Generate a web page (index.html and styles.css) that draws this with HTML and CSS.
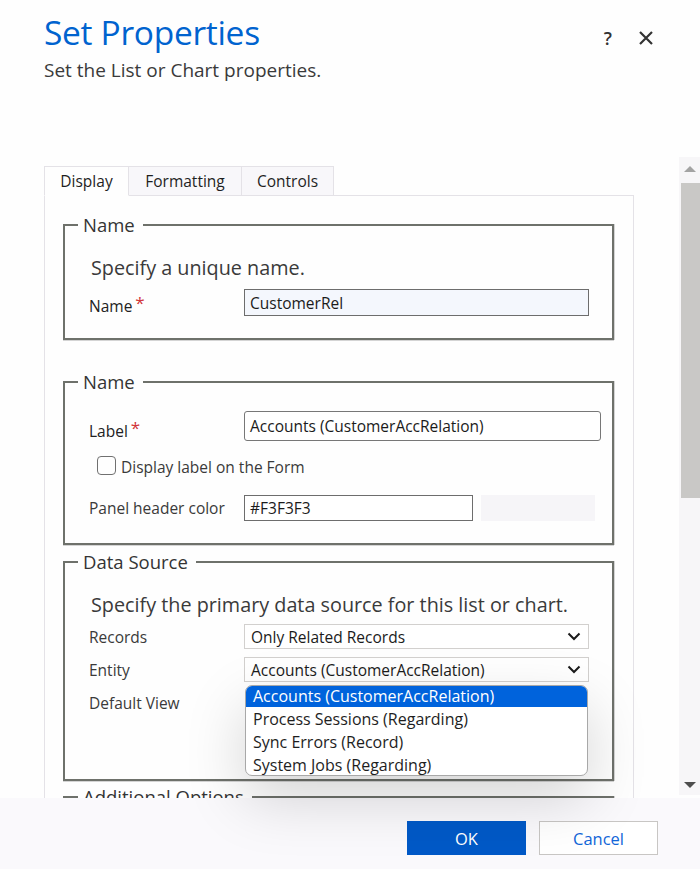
FILE: index.html
```html
<!DOCTYPE html>
<html lang="en">
<head>
<meta charset="utf-8">
<title>Set Properties</title>
<link rel="stylesheet" href="styles.css">
</head>
<body>
<div class="dialog">
  <header class="header">
    <div class="heading">
      <h1 class="title">Set Properties</h1>
      <p class="subtitle">Set the List or Chart properties.</p>
    </div>
    <div class="header-actions">
      <span class="help">?</span>
      <svg class="close" width="16" height="16" viewBox="0 0 16 16" aria-hidden="true">
        <path d="M2 2 L14 14 M14 2 L2 14" stroke="#333" stroke-width="2.2" fill="none"/>
      </svg>
    </div>
  </header>

  <div class="body">
    <div class="main">
      <div class="tabs">
        <div class="tab tab-active tab-display">Display</div>
        <div class="tab tab-formatting">Formatting</div>
        <div class="tab tab-controls">Controls</div>
        <div class="tab-rest"></div>
      </div>
      <div class="panel">
        <fieldset class="group group-name">
          <legend>Name</legend>
          <p class="desc">Specify a unique name.</p>
          <div class="row row-name">
            <label class="lbl">Name<span class="req">*</span></label>
            <div class="input input-name">CustomerRel</div>
          </div>
        </fieldset>

        <fieldset class="group group-label">
          <legend>Name</legend>
          <div class="row row-label">
            <label class="lbl lbl-dark">Label<span class="req">*</span></label>
            <div class="input input-label">Accounts (CustomerAccRelation)</div>
          </div>
          <div class="row row-check">
            <span class="checkbox"></span>
            <span class="check-text">Display label on the Form</span>
          </div>
          <div class="row row-color">
            <label class="lbl">Panel header color</label>
            <div class="input input-color">#F3F3F3</div>
            <div class="swatch"></div>
          </div>
        </fieldset>

        <fieldset class="group group-source">
          <legend>Data Source</legend>
          <p class="desc">Specify the primary data source for this list or chart.</p>
          <div class="row row-select">
            <label class="lbl">Records</label>
            <div class="select">Only Related Records
              <svg class="chev" width="14" height="9" viewBox="0 0 14 9"><path d="M1.5 1.5 L7 7 L12.5 1.5" stroke="#1b1b1b" stroke-width="2" fill="none"/></svg>
            </div>
          </div>
          <div class="row row-select row-entity">
            <label class="lbl">Entity</label>
            <div class="select">Accounts (CustomerAccRelation)
              <svg class="chev" width="14" height="9" viewBox="0 0 14 9"><path d="M1.5 1.5 L7 7 L12.5 1.5" stroke="#1b1b1b" stroke-width="2" fill="none"/></svg>
            </div>
            <ul class="dropdown">
              <li class="opt opt-selected">Accounts (CustomerAccRelation)</li>
              <li class="opt">Process Sessions (Regarding)</li>
              <li class="opt">Sync Errors (Record)</li>
              <li class="opt">System Jobs (Regarding)</li>
            </ul>
          </div>
          <div class="row row-view">
            <label class="lbl">Default View</label>
          </div>
        </fieldset>

        <fieldset class="group group-options">
          <legend>Additional Options</legend>
          <div class="spacer"></div>
        </fieldset>
      </div>
    </div>
    <div class="scrollbar">
      <span class="arrow-up"></span>
      <span class="thumb"></span>
      <span class="track"></span>
      <span class="arrow-down"></span>
    </div>
  </div>

  <footer class="footer">
    <button class="btn btn-primary">OK</button>
    <button class="btn btn-secondary">Cancel</button>
  </footer>
</div>
</body>
</html>
```

FILE: styles.css
```css
html, body {
  margin: 0;
  padding: 0;
  overflow: hidden;
  background: #fefefe;
}

body {
  font-family: "Open Sans", "Noto Sans", sans-serif;
  color: #323130;
}

.dialog {
  width: 700px;
  height: 869px;
  display: flex;
  flex-direction: column;
}

/* Header */
.header {
  height: 157px;
  display: flex;
  justify-content: space-between;
  align-items: flex-start;
  padding-left: 44px;
  box-sizing: border-box;
}

.title {
  margin: 12px 0 0 0;
  font-size: 33.5px;
  line-height: 40px;
  font-weight: 400;
  color: #0063cf;
  letter-spacing: -0.3px;
}

.subtitle {
  margin: 6px 0 0 0;
  font-size: 19px;
  line-height: 24px;
  color: #3a3a3a;
}

.header-actions {
  display: flex;
  align-items: center;
  gap: 26px;
  margin-top: 27px;
  margin-right: 46px;
}

.help {
  font-size: 18px;
  line-height: 22px;
  color: #333;
  font-weight: 600;
}

.close {
  display: block;
}

/* Body */
.body {
  height: 641px;
  display: flex;
  padding-left: 44px;
  position: relative;
}

.main {
  width: 590px;
  padding-top: 9px;
}

.tabs {
  display: flex;
  height: 30px;
}

.tab {
  box-sizing: border-box;
  height: 30px;
  border: 1px solid #e4e2e7;
  border-left: none;
  background: #f8f7fa;
  font-size: 15.5px;
  line-height: 28px;
  text-align: center;
  color: #1f1f1f;
}

.tab-display {
  width: 85px;
  border-left: 1px solid #e4e2e7;
  background: #fefefe;
  border-bottom-color: #fefefe;
}

.tab-formatting { width: 113px; }
.tab-controls { width: 92px; }

.tab-rest {
  flex: 1;
  border-bottom: 1px solid #e4e2e7;
}

.panel {
  border-left: 1px solid #e4e2e7;
  border-right: 1px solid #e4e2e7;
  padding: 18px 19px 0 18px;
}

/* Fieldsets */
.group {
  margin: 0;
  padding: 0 0 0 24px;
  border: 2px solid #6e716b;
  box-shadow: 0 1px 0 #d4d4d4, 1px 0 0 #d4d4d4;
  min-width: 0;
  position: relative;
}

.group legend {
  font-size: 18.5px;
  line-height: 22px;
  padding: 0 8px 0 5px;
  margin-left: -11px;
  color: #343434;
}

.group-name { padding-bottom: 21px; }
.group-label { margin-top: 31px; padding-bottom: 22px; }
.group-source { margin-top: 6px; padding-bottom: 64px; }
.group-options { margin-top: 5px; }

.spacer { height: 60px; }

.desc {
  margin: 19px 0 0 2px;
  font-size: 19.8px;
  line-height: 26px;
  color: #3a3a3a;
}

.row {
  display: flex;
  align-items: center;
}

.lbl {
  width: 155px;
  flex: none;
  font-size: 15.5px;
  color: #3a3a3a;
}

.lbl-dark { color: #222; }

.req {
  color: #d13438;
  margin-left: 3px;
  font-size: 17px;
  position: relative;
  top: -3px;
}

.input {
  box-sizing: border-box;
  border: 1px solid #6d6d6d;
  background: #fff;
  font-size: 15.5px;
  padding-left: 5px;
  color: #1b1b1b;
  display: flex;
  align-items: center;
}

.row-name { margin-top: 7px; }
.row-name .lbl { padding-top: 6px; color: #222; }

.input-name {
  width: 345px;
  height: 27px;
  background: #f4f7fd;
}

.row-label { margin-top: 16px; }
.row-label .lbl { padding-top: 10px; }

.input-label {
  width: 357px;
  height: 30px;
  border-radius: 3px;
  border-color: #777;
}

.row-check {
  margin-top: 14px;
  height: 22px;
  margin-left: 8px;
}

.checkbox {
  box-sizing: border-box;
  width: 19px;
  height: 19px;
  border: 1.5px solid #707070;
  border-radius: 4px;
  margin-top: -3px;
}

.check-text {
  margin-left: 5px;
  font-size: 15.5px;
  color: #3a3a3a;
}

.row-color { margin-top: 17px; }

.input-color {
  width: 229px;
  height: 26px;
}

.swatch {
  width: 114px;
  height: 26px;
  margin-left: 8px;
  background: #f6f5f8;
}

.row-select { margin-top: 6px; }
.row-entity { margin-top: 8px; position: relative; }

.select {
  box-sizing: border-box;
  width: 345px;
  height: 25px;
  border: 1px solid #d2d0ce;
  background: #fff;
  font-size: 15.5px;
  padding-left: 6px;
  color: #1b1b1b;
  display: flex;
  align-items: center;
  justify-content: space-between;
  padding-right: 7px;
}

.chev { display: block; }

.row-view {
  margin-top: 8px;
  height: 25px;
}

/* Dropdown popup */
.dropdown {
  position: absolute;
  left: 156px;
  top: 28px;
  width: 343px;
  height: 91px;
  box-sizing: border-box;
  margin: 0;
  padding: 0;
  list-style: none;
  background: #fff;
  border: 1px solid #a8a8a8;
  border-radius: 7px;
  overflow: hidden;
  z-index: 10;
  box-shadow: 0 22px 60px rgba(0, 0, 0, 0.17);
}

.opt {
  height: 23px;
  line-height: 23px;
  font-size: 16px;
  padding-left: 7px;
  color: #1e1e1e;
  white-space: nowrap;
}

.opt-selected {
  height: 21px;
  line-height: 21px;
  background: #0063dc;
  color: #fff;
  margin-bottom: 1px;
}

/* Scrollbar */
.scrollbar {
  position: absolute;
  right: 0;
  top: 0;
  width: 21px;
  height: 638px;
  background: #f7f6f8;
  display: flex;
  flex-direction: column;
  align-items: center;
}

.arrow-up {
  margin-top: 9px;
  width: 0;
  height: 0;
  border-left: 6px solid transparent;
  border-right: 6px solid transparent;
  border-bottom: 6px solid #a3a3a3;
}

.thumb {
  margin-top: 11px;
  width: 19px;
  margin-left: 2px;
  height: 315px;
  background: #c9c8c6;
}

.track { flex: 1; }

.arrow-down {
  margin-bottom: 7px;
  width: 0;
  height: 0;
  border-left: 6px solid transparent;
  border-right: 6px solid transparent;
  border-top: 6px solid #4e4e4e;
}

/* Footer */
.footer {
  position: relative;
  z-index: 5;
  height: 71px;
  box-sizing: border-box;
  background: #faf9fc;
  display: flex;
  justify-content: flex-end;
  align-items: flex-start;
  padding: 23px 42px 0 0;
  gap: 13px;
}

.btn {
  width: 119px;
  height: 34px;
  box-sizing: border-box;
  font-family: "Open Sans", "Noto Sans", sans-serif;
  font-size: 16.5px;
  cursor: pointer;
}

.btn-primary {
  background: #0059c7;
  border: 1px solid #0059c7;
  color: #fff;
}

.btn-secondary {
  background: #fff;
  border: 1px solid #c8c6c4;
  color: #1166d8;
}
```
